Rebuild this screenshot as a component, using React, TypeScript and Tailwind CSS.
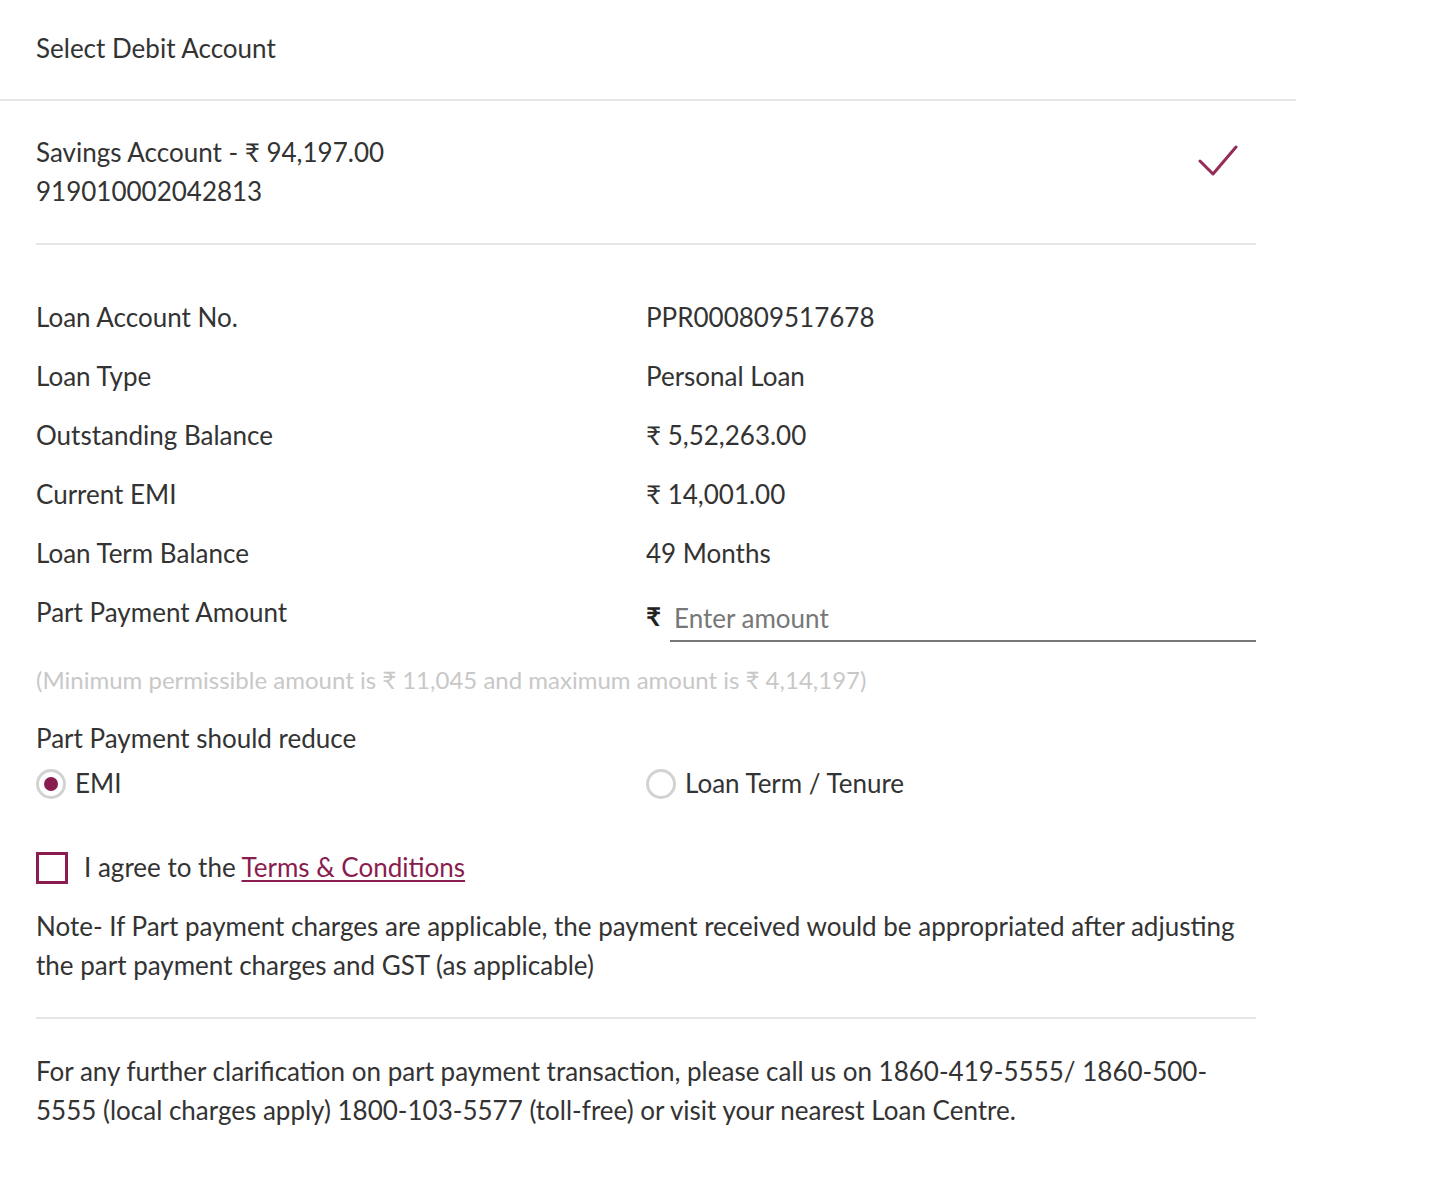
import { useState } from "react";

const details = [
  { label: "Loan Account No.", value: "PPR000809517678" },
  { label: "Loan Type", value: "Personal Loan" },
  { label: "Outstanding Balance", value: "₹ 5,52,263.00" },
  { label: "Current EMI", value: "₹ 14,001.00" },
  { label: "Loan Term Balance", value: "49 Months" },
];

function Radio({ checked, label, onClick }: { checked: boolean; label: string; onClick: () => void }) {
  return (
    <button type="button" onClick={onClick} className="flex h-[39px] items-center gap-[9px] text-left">
      <span className="flex h-[30px] w-[30px] items-center justify-center rounded-full border-[3px] border-[#d2d2d2]">
        {checked && <span className="h-[14px] w-[14px] rounded-full bg-[#8a1d4f]" />}
      </span>
      <span>{label}</span>
    </button>
  );
}

export default function App() {
  const [reduce, setReduce] = useState<"emi" | "tenure">("emi");
  const [agreed, setAgreed] = useState(false);
  const [amount, setAmount] = useState("");

  return (
    <div className="min-h-[1194px] bg-white font-['Lato',sans-serif] text-[26px] leading-[39px] text-[#333333]">
      <div className="w-[1296px]">
        <div className="flex h-[101px] items-center border-b-2 border-[#e6e6e6] px-9 pb-[2px]">
          Select Debit Account
        </div>

        <div className="pl-9 pr-10">
          {/* debit account */}
          <div className="flex items-start justify-between border-b-2 border-[#e6e6e6] pt-[32px] pb-[32px]">
            <div>
              <div>Savings Account - ₹ 94,197.00</div>
              <div>919010002042813</div>
            </div>
            <svg width="40" height="34" viewBox="0 0 40 34" className="mt-[11px] mr-[18px]">
              <path d="M2 17 L15 30 L38 3" fill="none" stroke="#952b58" strokeWidth="3" strokeLinecap="round" strokeLinejoin="round" />
            </svg>
          </div>

          {/* loan details */}
          <div className="mt-[43px] grid grid-cols-2">
            {details.map(({ label, value }) => (
              <div key={label} className="col-span-2 grid h-[59px] grid-cols-2 items-center">
                <div>{label}</div>
                <div>{value}</div>
              </div>
            ))}
            <div className="col-span-2 grid h-[59px] grid-cols-2">
              <div className="flex items-center">Part Payment Amount</div>
              <div className="flex items-end">
                <div className="flex h-[44px] w-full items-center">
                  <span className="mb-[8px] w-[24px] font-bold text-[#222]">₹</span>
                  <input
                    value={amount}
                    onChange={(e) => setAmount(e.target.value)}
                    placeholder="Enter amount"
                    className="h-full flex-1 border-b-2 border-[#777] bg-transparent px-[4px] pb-[2px] outline-none placeholder:text-[#777]"
                  />
                </div>
              </div>
            </div>
          </div>

          <div className="mt-[23px] text-[24px] leading-[30px] text-[#c8c8c8]">
            (Minimum permissible amount is ₹ 11,045 and maximum amount is ₹ 4,14,197)
          </div>

          <div className="mt-[24px]">Part Payment should reduce</div>
          <div className="mt-[6px] grid grid-cols-2">
            <Radio checked={reduce === "emi"} label="EMI" onClick={() => setReduce("emi")} />
            <Radio checked={reduce === "tenure"} label="Loan Term / Tenure" onClick={() => setReduce("tenure")} />
          </div>

          <label className="mt-[45px] flex h-[39px] cursor-pointer items-center gap-[16px]">
            <input type="checkbox" checked={agreed} onChange={(e) => setAgreed(e.target.checked)} className="peer sr-only" />
            <span className="flex h-[32px] w-[32px] items-center justify-center border-[3px] border-[#8a1d4f]">
              {agreed && <span className="h-[14px] w-[14px] bg-[#8a1d4f]" />}
            </span>
            <span>
              I agree to the{" "}
              <a href="#" className="text-[#8a1d4f] underline underline-offset-[3px]">
                Terms &amp; Conditions
              </a>
            </span>
          </label>

          <p className="mt-[20px]">
            Note- If Part payment charges are applicable, the payment received would be appropriated after adjusting the
            part payment charges and GST (as applicable)
          </p>

          <div className="mt-[32px] border-b-2 border-[#e6e6e6]" />

          <p className="mt-[33px]">
            For any further clarification on part payment transaction, please call us on 1860-419-5555/ 1860-500-5555 (local
            charges apply) 1800-103-5577 (toll-free) or visit your nearest Loan Centre.
          </p>
        </div>
      </div>
    </div>
  );
}
